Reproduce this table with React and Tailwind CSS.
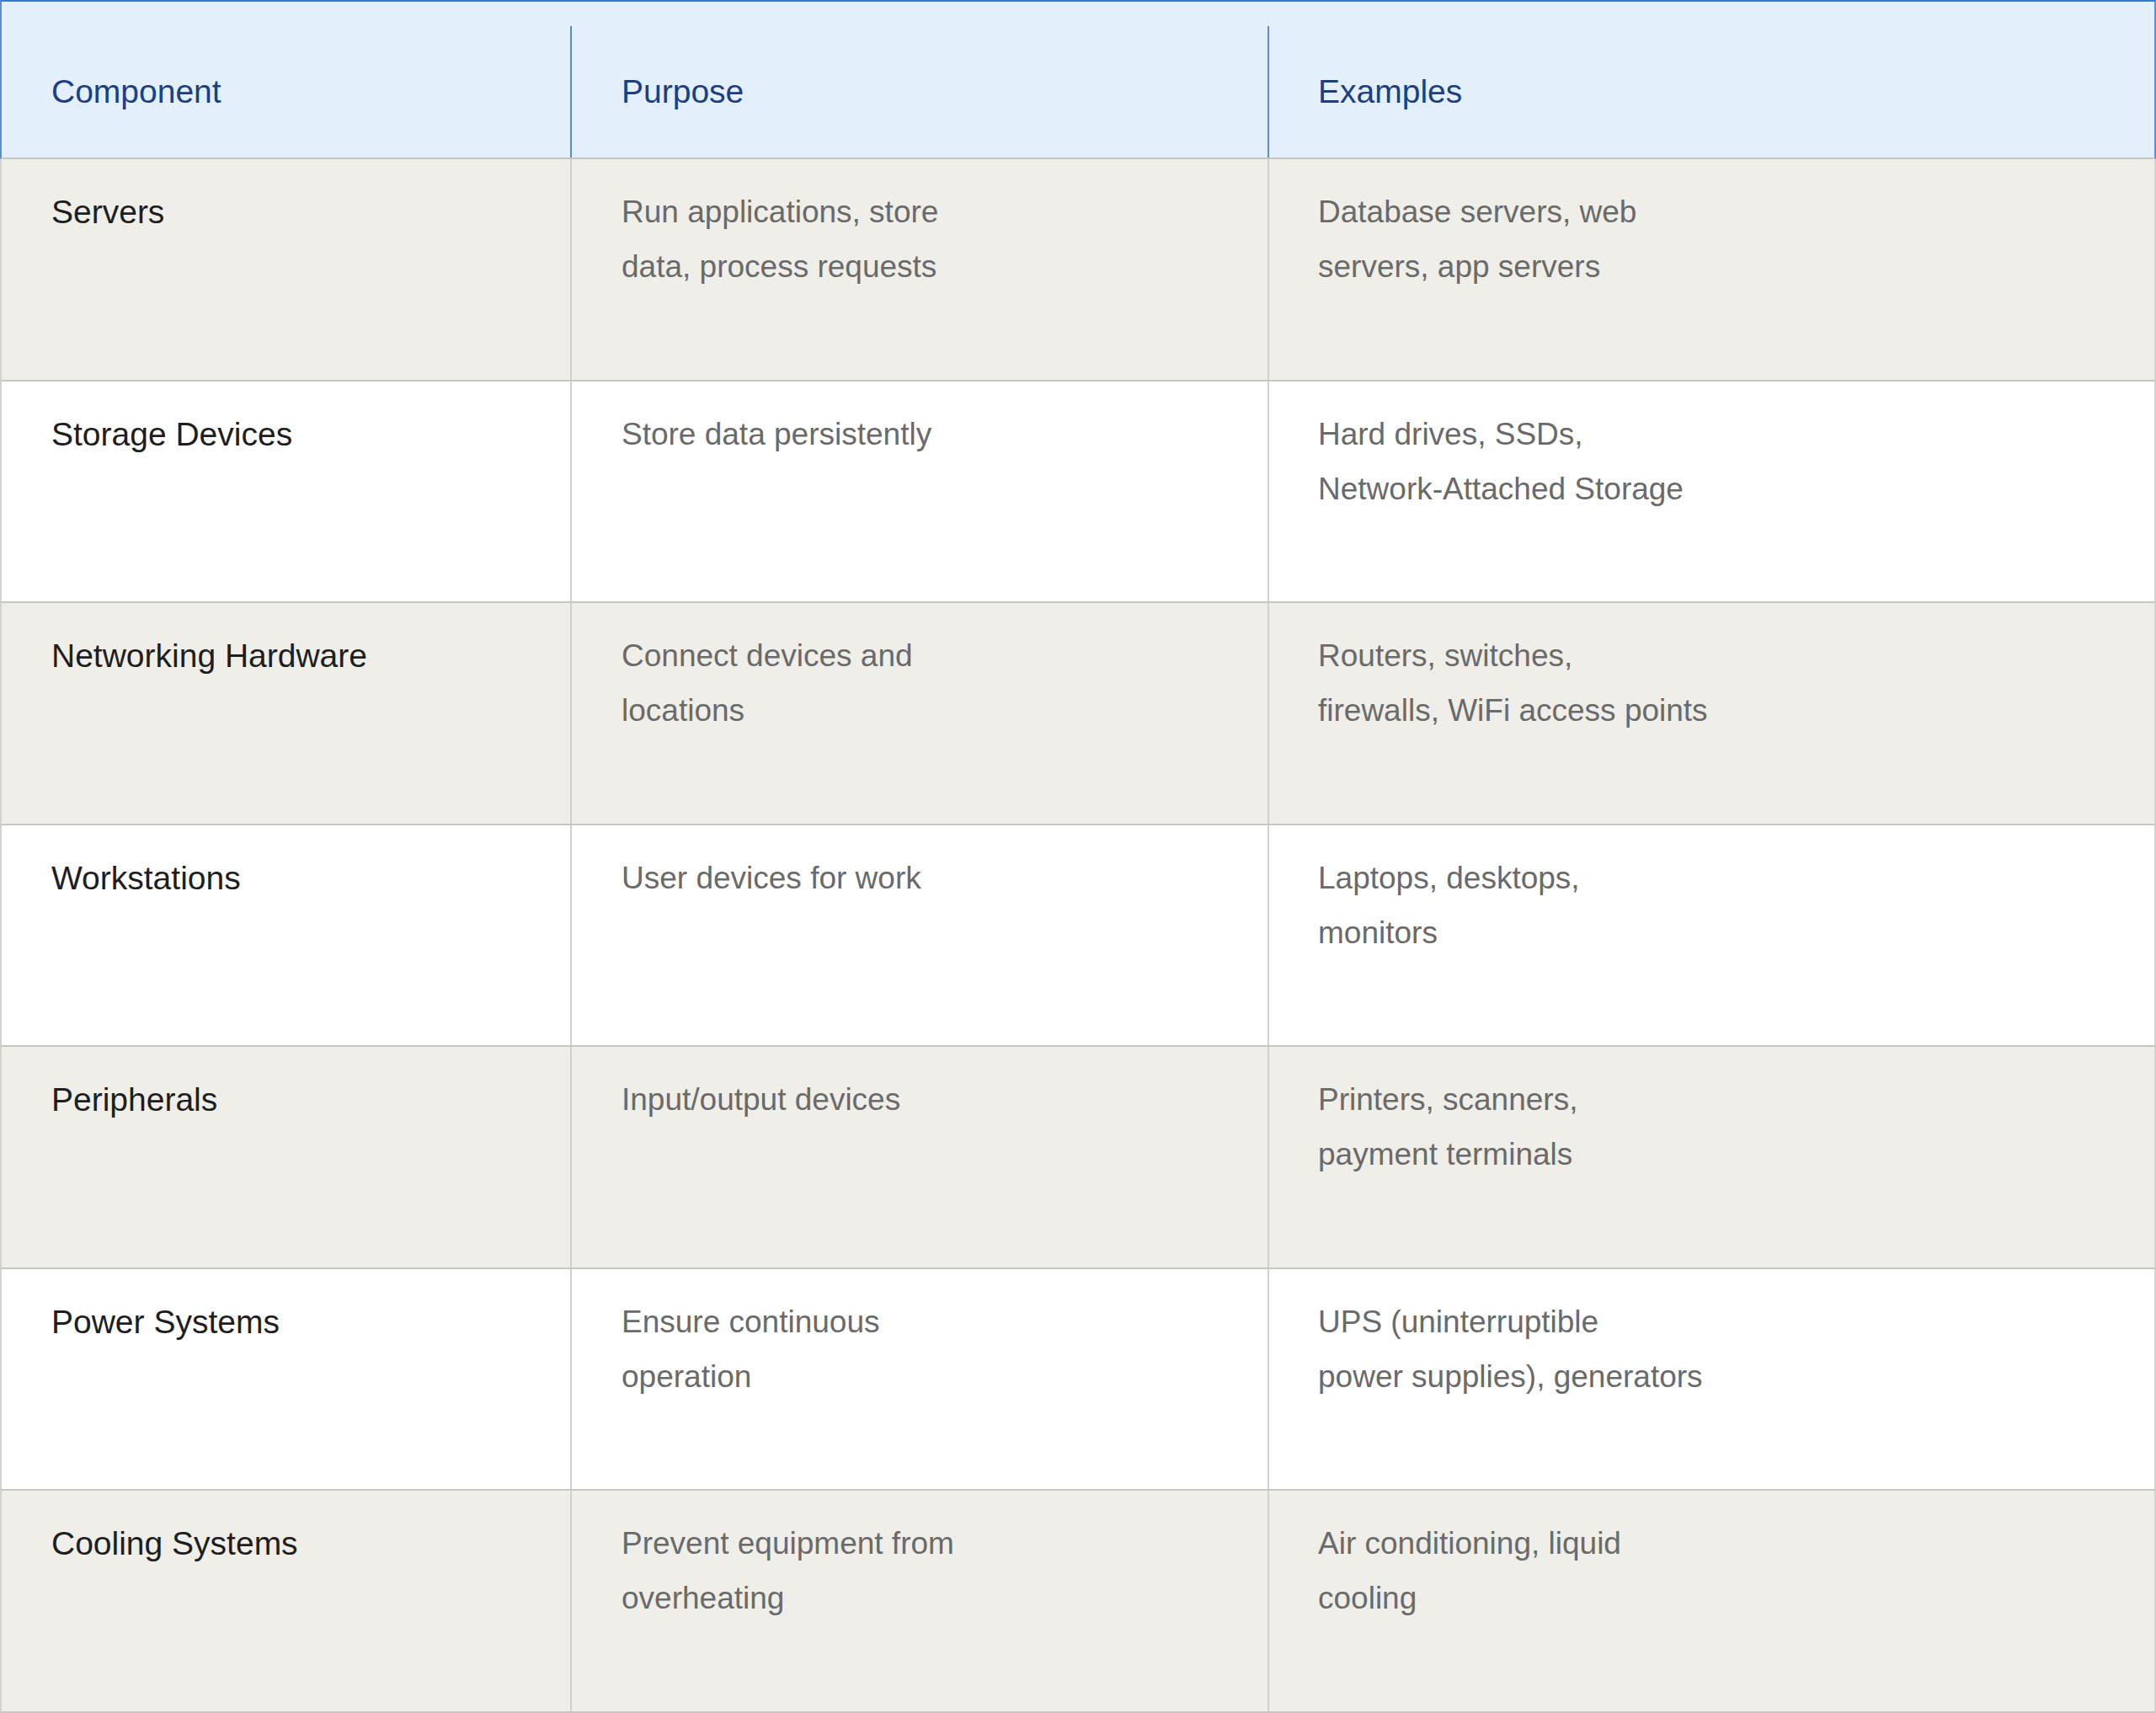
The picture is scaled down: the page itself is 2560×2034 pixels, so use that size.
import React from "react";

const rows = [
  ["Servers", ["Run applications, store", "data, process requests"], ["Database servers, web", "servers, app servers"]],
  ["Storage Devices", ["Store data persistently"], ["Hard drives, SSDs,", "Network-Attached Storage"]],
  ["Networking Hardware", ["Connect devices and", "locations"], ["Routers, switches,", "firewalls, WiFi access points"]],
  ["Workstations", ["User devices for work"], ["Laptops, desktops,", "monitors"]],
  ["Peripherals", ["Input/output devices"], ["Printers, scanners,", "payment terminals"]],
  ["Power Systems", ["Ensure continuous", "operation"], ["UPS (uninterruptible", "power supplies), generators"]],
  ["Cooling Systems", ["Prevent equipment from", "overheating"], ["Air conditioning, liquid", "cooling"]],
];

function Lines({ lines }) {
  return (
    <div>
      {lines.map((l, i) => (
        <div key={i} className="whitespace-nowrap">{l}</div>
      ))}
    </div>
  );
}

export default function App() {
  return (
    <div
      className="w-[2560px] h-[2034px] flex flex-col bg-white text-[39px] leading-[65px]"
      style={{ fontFamily: '"Liberation Sans", Arial, sans-serif' }}
    >
      <div className="h-[189px] shrink-0 grid grid-cols-[675px_828px_1053px] bg-[#e3effa] border-t-2 border-t-[#3a77c8] border-l-2 border-l-[#5b8fd4] border-r-2 border-r-[#5b8fd4] border-b-2 border-b-[#c6c6c2] text-[#1c3f84]">
        <div className="pl-[59px] pt-[74px]">Component</div>
        <div className="mt-[29px] border-l-2 border-[#5b8fd4] pl-[59px] pt-[45px]">Purpose</div>
        <div className="mt-[29px] border-l-2 border-[#5b8fd4] pl-[58px] pt-[45px]">Examples</div>
      </div>
      {rows.map((r, i) => (
        <div
          key={i}
          className={
            "flex-1 grid grid-cols-[675px_828px_1053px] border-b-2 border-b-[#c6c6c2] border-l-2 border-l-[#d2d2ce] border-r-2 border-r-[#d2d2ce] " +
            (i % 2 === 0 ? "bg-[#efeee9]" : "bg-white")
          }
        >
          <div className="pl-[59px] pt-[30px] text-[#1e1e1e]">{r[0]}</div>
          <div className="border-l-2 border-[#d0d0cc] pl-[59px] pt-[30px] text-[37px] text-[#6a6a6a]">
            <Lines lines={r[1]} />
          </div>
          <div className="border-l-2 border-[#d0d0cc] pl-[58px] pt-[30px] text-[37px] text-[#6a6a6a]">
            <Lines lines={r[2]} />
          </div>
        </div>
      ))}
    </div>
  );
}
